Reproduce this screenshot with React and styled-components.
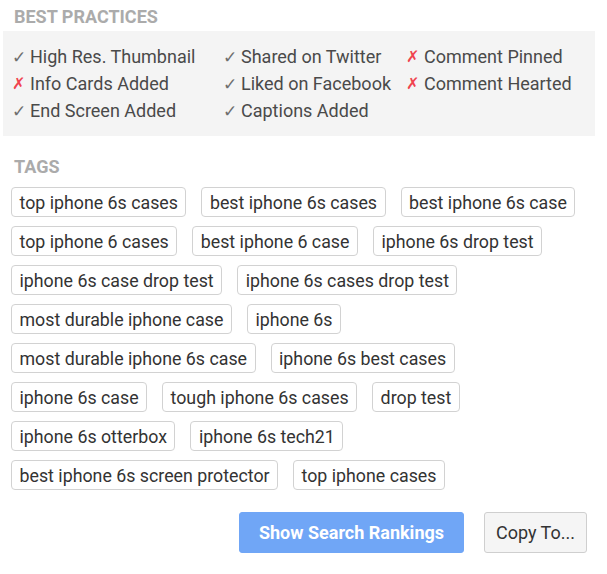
import React from "react";
import styled, { createGlobalStyle } from "styled-components";

const Global = createGlobalStyle`
  body {
    margin: 0;
    background: #fff;
    font-family: Roboto, "Liberation Sans", sans-serif;
  }
`

const Page = styled.div`
  width: 607px;
  padding: 7px 0 0 0;
  box-sizing: border-box;`

const Label = styled.div`
  font-size: 18px;
  font-weight: 700;
  color: #ababab;
  padding-left: 14px;
  line-height: 20px;
  margin-bottom: ${(p) => p.gap || 4}px;`

const Practices = styled.div`
  margin: 0 12px 0 3px;
  background: #f4f4f4;
  padding: 12px 0 12px 9px;
  display: grid;
  grid-template-columns: 211px 183px auto;
  grid-auto-rows: 27px;
  font-size: 18px;
  color: #4a4a4a;`

const Item = styled.div`
  display: flex;
  align-items: center;
  white-space: nowrap;`

const Mark = styled.span`
  width: 18px;
  color: ${(p) => (p.ok ? "#6f6f6f" : "#f0444f")};
  font-family: "DejaVu Sans", sans-serif;
  font-size: ${(p) => (p.ok ? 17 : 16)}px;`

const Tags = styled.div`
  display: flex;
  flex-direction: column;
  gap: 9px;
  padding-left: 11px;`

const TagRow = styled.div`
  display: flex;
  gap: 15px;`

const Tag = styled.span`
  height: 30px;
  box-sizing: border-box;
  border: 1px solid #d2d2d2;
  border-radius: 4px;
  padding: 0 7.5px;
  display: flex;
  align-items: center;
  font-size: 17.8px;
  color: #333;
  white-space: nowrap;`

const Actions = styled.div`
  display: flex;
  justify-content: flex-end;
  gap: 20px;
  padding: 22px 20px 0 0;`

const Button = styled.button`
  height: 41px;
  box-sizing: border-box;
  border-radius: 3px;
  font-family: Roboto, "Liberation Sans", sans-serif;
  font-size: 18px;
  cursor: pointer;
  border: 1px solid ${(p) => (p.primary ? "#70a6f6" : "#cfcfcf")};
  background: ${(p) => (p.primary ? "#70a6f6" : "#f5f5f5")};
  color: ${(p) => (p.primary ? "#fff" : "#333")};
  font-weight: ${(p) => (p.primary ? 700 : 400)};
  padding: 0 ${(p) => (p.primary ? 19 : 11)}px;`

const practices = [
  ["High Res. Thumbnail", true],
  ["Shared on Twitter", true],
  ["Comment Pinned", false],
  ["Info Cards Added", false],
  ["Liked on Facebook", true],
  ["Comment Hearted", false],
  ["End Screen Added", true],
  ["Captions Added", true],
]

const tagRows = [
  ["top iphone 6s cases", "best iphone 6s cases", "best iphone 6s case"],
  ["top iphone 6 cases", "best iphone 6 case", "iphone 6s drop test"],
  ["iphone 6s case drop test", "iphone 6s cases drop test"],
  ["most durable iphone case", "iphone 6s"],
  ["most durable iphone 6s case", "iphone 6s best cases"],
  ["iphone 6s case", "tough iphone 6s cases", "drop test"],
  ["iphone 6s otterbox", "iphone 6s tech21"],
  ["best iphone 6s screen protector", "top iphone cases"],
]

const App = () => {
  return (
    <Page>
      <Global />
      <Label>BEST PRACTICES</Label>
      <Practices>
        {practices.map(([text, ok]) => (
          <Item key={text}>
            <Mark ok={ok}>{ok ? "✓" : "✗"}</Mark>
            {text}
          </Item>
        ))}
      </Practices>
      <Label gap={10} style={{ marginTop: 21 }}>TAGS</Label>
      <Tags>
        {tagRows.map((row, i) => (
          <TagRow key={i}>
            {row.map((t) => <Tag key={t}>{t}</Tag>)}
          </TagRow>
        ))}
      </Tags>
      <Actions>
        <Button primary>Show Search Rankings</Button>
        <Button>Copy To...</Button>
      </Actions>
    </Page>
  )
}

export default App
